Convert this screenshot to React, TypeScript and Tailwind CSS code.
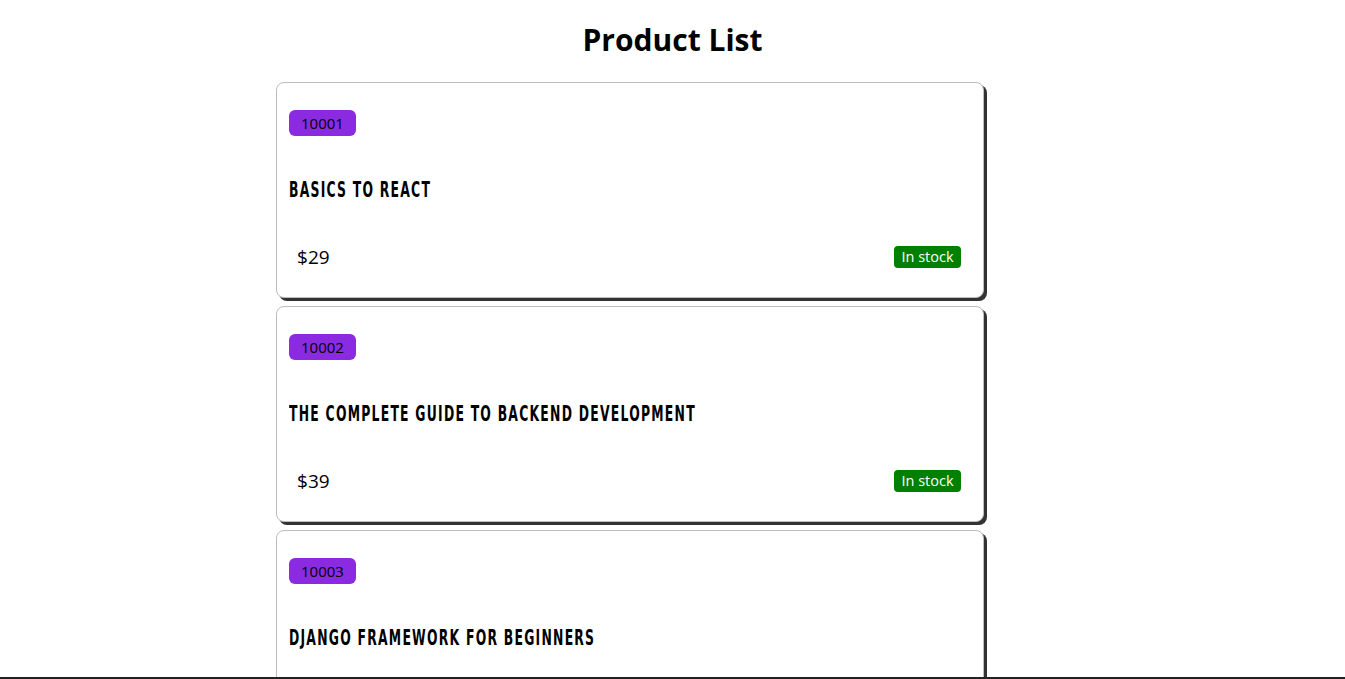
const products = [
  { id: 10001, title: "Basics to React", price: 29, inStock: true },
  { id: 10002, title: "The Complete Guide to Backend Development", price: 39, inStock: true },
  { id: 10003, title: "Django Framework for Beginners", price: 49, inStock: true },
];

type Product = (typeof products)[number];

function ProductCard({ p }: { p: Product }) {
  return (
    <div className="mb-2 h-[216px] w-[708px] rounded-lg border border-[#bdbdbd] bg-white px-3 shadow-[3px_3px_0_0_#333]">
      <div className="pt-[27px]">
        <span className="inline-flex h-[26px] w-[67px] items-center justify-center rounded-md bg-[#8a2be2] font-['Open_Sans',sans-serif] text-[15px] text-black">
          {p.id}
        </span>
      </div>
      {/* condensed display face isn't installed, so squeeze a bold sans */}
      <h2 className="mt-[42px] whitespace-nowrap leading-[24px]">
        <span className="inline-block origin-left scale-x-[0.59] font-['DejaVu_Sans',sans-serif] text-[21px] font-bold uppercase tracking-[0.1em] text-black">
          {p.title}
        </span>
      </h2>
      <div className="mt-[40px] flex items-center justify-between pl-2 pr-[10px]">
        <span className="font-['Open_Sans',sans-serif] text-[19px] text-black">${p.price}</span>
        {p.inStock ? (
          <span className="inline-flex h-[22px] w-[67px] items-center justify-center rounded bg-[#008000] font-['Open_Sans',sans-serif] text-[14.5px] text-white">
            In stock
          </span>
        ) : null}
      </div>
    </div>
  );
}

export default function App() {
  return (
    <div className="min-h-screen bg-white">
      <h1 className="pt-[20px] pb-[22px] text-center font-['Open_Sans',sans-serif] text-[30px] font-bold leading-[40px] text-black">
        Product List
      </h1>
      <div className="pl-[276px]">
        {products.map((p) => (
          <ProductCard key={p.id} p={p} />
        ))}
      </div>
      <div className="pointer-events-none fixed inset-x-0 bottom-0 h-[2px] bg-[#222]" aria-hidden />
    </div>
  );
}
